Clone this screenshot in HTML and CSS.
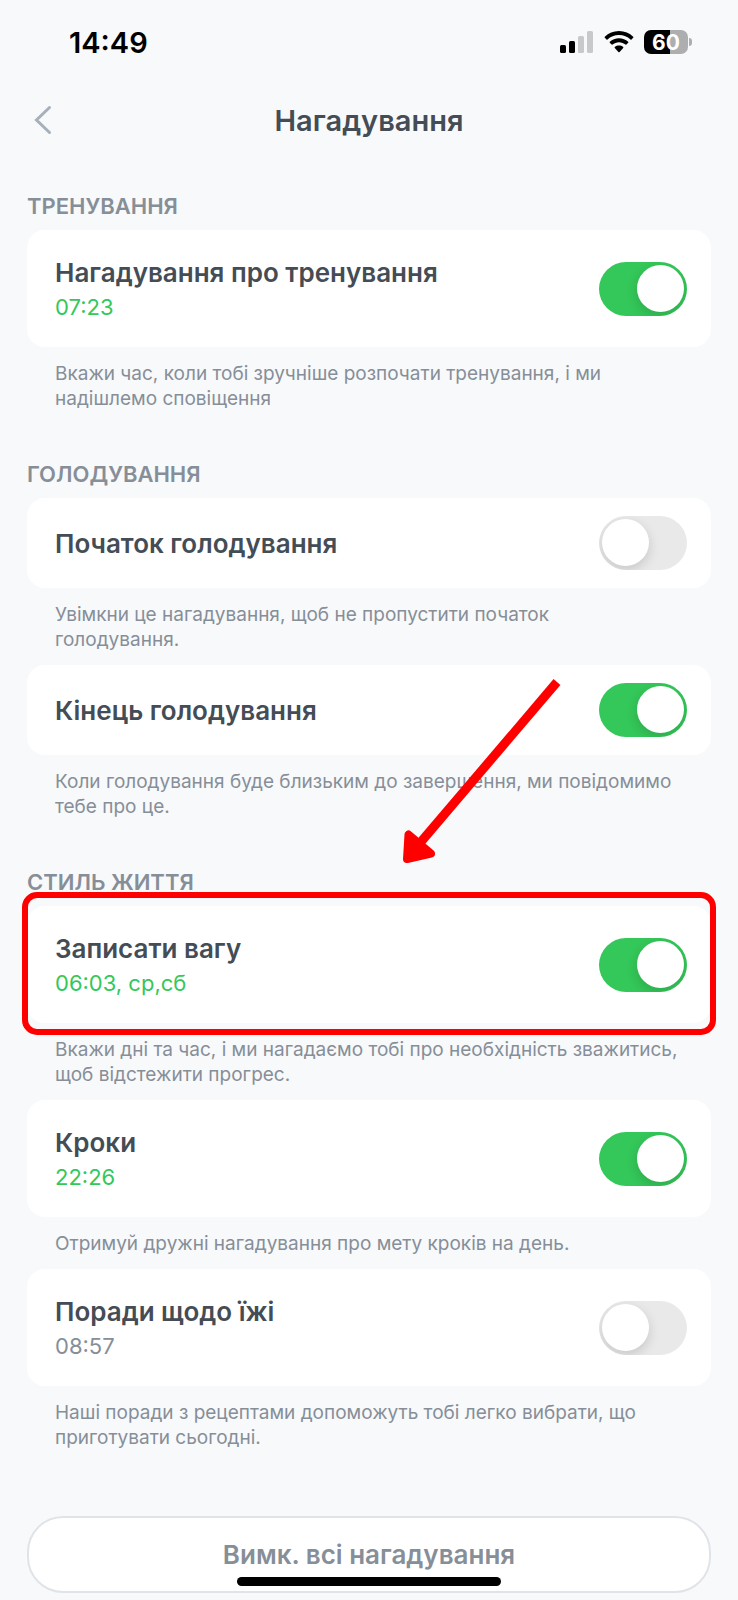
FILE: index.html
```html
<!DOCTYPE html>
<html lang="uk">
<head>
    <meta charset="UTF-8">
    <meta name="viewport" content="width=device-width, initial-scale=1.0">
    <title>Нагадування</title>
    <link rel="stylesheet" href="styles.css">
</head>
<body>
    <div class="status-bar">
        <span class="clock">14:49</span>
        <div class="status-icons">
            <svg width="34" height="22" viewBox="0 0 34 22">
                <rect x="0" y="14" width="6" height="8" rx="1.5"/>
                <rect x="9" y="10" width="6" height="12" rx="1.5"/>
                <rect class="bar-off" x="18" y="5" width="6" height="17" rx="1.5"/>
                <rect class="bar-off" x="27" y="0" width="6" height="22" rx="1.5"/>
            </svg>
            <svg width="30" height="22" viewBox="0 0 30 22">
                <path d="M15 0C9.400 0 4.400 2.200.8 5.800c-.3.300-.3.700 0 1l1.700 1.700c.3.300.7.300 1 0C6.500 5.600 10.500 4 15 4s8.500 1.600 11.500 4.500c.3.300.7.300 1 0l1.700-1.700c.3-.3.300-.7 0-1C25.600 2.200 20.600 0 15 0z"/>
                <path d="M15 7.300c-3.500 0-6.700 1.300-9.200 3.500-.3.300-.3.700 0 1l1.800 1.800c.3.300.6.300.9 0 1.800-1.500 4-2.400 6.500-2.400s4.700.9 6.500 2.400c.3.300.6.300.9 0l1.800-1.800c.3-.3.300-.7 0-1-2.500-2.200-5.700-3.500-9.200-3.500z"/>
                <path d="M15 14.500c-1.600 0-3 .5-4.200 1.400-.3.300-.3.700 0 1l3.600 4c.4.400.8.400 1.200 0l3.600-4c.3-.3.300-.7 0-1-1.200-.9-2.600-1.400-4.200-1.400z"/>
            </svg>
            <div class="battery">60</div>
        </div>
    </div>

    <header class="header">
        <button class="back" aria-label="Назад">
            <svg width="18" height="30" viewBox="0 0 18 30">
                <path d="M15.500 2.500L2.500 15l13 12.500" fill="none" stroke="#a6b0ba" stroke-width="3" stroke-linecap="round"/>
            </svg>
        </button>
        <h1>Нагадування</h1>
    </header>

    <main>
        <section>
            <h2>ТРЕНУВАННЯ</h2>
            <div class="card">
                <label for="workout">Нагадування про тренування <span class="time">07:23</span></label>
                <input class="toggle" type="checkbox" id="workout" checked>
            </div>
            <p>Вкажи час, коли тобі зручніше розпочати тренування, і ми надішлемо сповіщення</p>
        </section>

        <section>
            <h2>ГОЛОДУВАННЯ</h2>
            <div class="card">
                <label for="fast-start">Початок голодування</label>
                <input class="toggle" type="checkbox" id="fast-start">
            </div>
            <p>Увімкни це нагадування, щоб не пропустити початок<br>голодування.</p>
            <div class="card">
                <label for="fast-end">Кінець голодування</label>
                <input class="toggle" type="checkbox" id="fast-end" checked>
            </div>
            <p>Коли голодування буде близьким до завершення, ми повідомимо тебе про це.</p>
        </section>

        <section>
            <h2>СТИЛЬ ЖИТТЯ</h2>
            <div class="card highlighted">
                <label for="weight">Записати вагу <span class="time">06:03, ср,сб</span></label>
                <input class="toggle" type="checkbox" id="weight" checked>
                <!-- arrow pointing at the highlighted card -->
                <svg class="arrow" width="170" height="200" viewBox="0 0 170 200">
                    <path d="M157 10L20 171" stroke="#f00" stroke-width="9" fill="none"/>
                    <path d="M8.500 162.500L7 187L31 181.500Z" fill="#f00" stroke="#f00" stroke-width="8" stroke-linejoin="round"/>
                </svg>
            </div>
            <p>Вкажи дні та час, і ми нагадаємо тобі про необхідність зважитись, щоб відстежити прогрес.</p>
            <div class="card">
                <label for="steps">Кроки <span class="time">22:26</span></label>
                <input class="toggle" type="checkbox" id="steps" checked>
            </div>
            <p>Отримуй дружні нагадування про мету кроків на день.</p>
            <div class="card">
                <label for="food">Поради щодо їжі <span class="time off">08:57</span></label>
                <input class="toggle" type="checkbox" id="food">
            </div>
            <p>Наші поради з рецептами допоможуть тобі легко вибрати, що приготувати сьогодні.</p>
        </section>

        <button class="disable-all">Вимк. всі нагадування</button>
    </main>
    <div class="home-bar"></div>
</body>
</html>
```
FILE: styles.css
```css
* {
    box-sizing: border-box;
}

body {
    margin: 0;
    background-color: #f8f9fb;
    color: #444c55;
    font-family: Inter, "Noto Sans", sans-serif;
}

button {
    font-family: inherit;
    cursor: pointer;
}

.status-bar {
    display: flex;
    justify-content: space-between;
    align-items: center;
    height: 84px;
    padding: 0 47px 0 69px;
    color: #000;
}

.clock {
    font-size: 29px;
    font-weight: 600;
}

.status-icons {
    display: flex;
    align-items: center;
    gap: 10px;
}

.bar-off {
    fill: #c8c9ca;
}

.battery {
    position: relative;
    width: 44px;
    height: 24px;
    margin-right: 3px;
    border-radius: 7px;
    background: linear-gradient(to right, #000 60%, #adaeaf 60%);
    color: #fff;
    font-size: 21px;
    font-weight: 700;
    line-height: 25px;
    text-align: center;
}

.battery::after {
    content: "";
    position: absolute;
    left: 45px;
    top: 8px;
    width: 3px;
    height: 8px;
    border-radius: 0 4px 4px 0;
    background-color: #adaeaf;
}

.header {
    display: grid;
    grid-template-columns: 40px 1fr 40px;
    align-items: center;
    height: 72px;
    padding: 0 27px;
}

.back {
    display: flex;
    padding: 0 7px;
    border: none;
    background: none;
}

h1 {
    margin: 0;
    font-size: 29px;
    font-weight: 600;
    text-align: center;
}

main {
    padding: 0 27px;
}

section {
    padding-top: 35px;
    margin-bottom: 13px;
}

h2 {
    margin: 0 0 9px;
    color: #868e98;
    font-size: 22px;
    font-weight: 600;
    line-height: 30px;
}

.card {
    display: flex;
    justify-content: space-between;
    align-items: center;
    padding: 18px 24px 18px 28px;
    border-radius: 18px;
    background-color: #fff;
}

.card label {
    padding: 8px 0 6px;
    font-size: 26px;
    font-weight: 600;
    line-height: 34px;
}

.time {
    display: block;
    padding-top: 2px;
    color: #34c759;
    font-size: 22px;
    font-weight: 400;
    line-height: 31px;
}

.time.off {
    color: #868e98;
}

section p {
    margin: 14px 28px 13px;
    color: #868e98;
    font-size: 19px;
    line-height: 25px;
}

.toggle {
    appearance: none;
    flex: none;
    width: 88px;
    height: 54px;
    margin: 0;
    padding: 3px;
    border-radius: 27px;
    background-color: #e9e9e9;
    overflow: hidden;
    cursor: pointer;
}

.toggle::before {
    content: "";
    display: block;
    width: 47px;
    height: 47px;
    border-radius: 50%;
    background-color: #fff;
    box-shadow: 0 4px 12px rgba(0, 0, 0, 0.15);
}

.toggle:checked {
    background-color: #34c759;
}

.toggle:checked::before {
    margin-left: 35px;
}

.highlighted {
    position: relative;
}

.highlighted::after {
    content: "";
    position: absolute;
    inset: -14px -5px -12px;
    border: 6px solid #f00;
    border-radius: 15px;
    pointer-events: none;
}

.arrow {
    position: absolute;
    left: 373px;
    top: -234px;
    pointer-events: none;
}

.disable-all {
    display: block;
    width: 100%;
    height: 77px;
    margin: 66px 0 5px;
    border: 2px solid #e0e4e8;
    border-radius: 36px;
    background-color: #fff;
    color: #868e98;
    font-size: 26px;
    font-weight: 600;
}

/* sits over the bottom button */
.home-bar {
    position: fixed;
    bottom: 14px;
    left: 50%;
    width: 264px;
    height: 9px;
    margin-left: -132px;
    border-radius: 5px;
    background-color: #000;
}
```
